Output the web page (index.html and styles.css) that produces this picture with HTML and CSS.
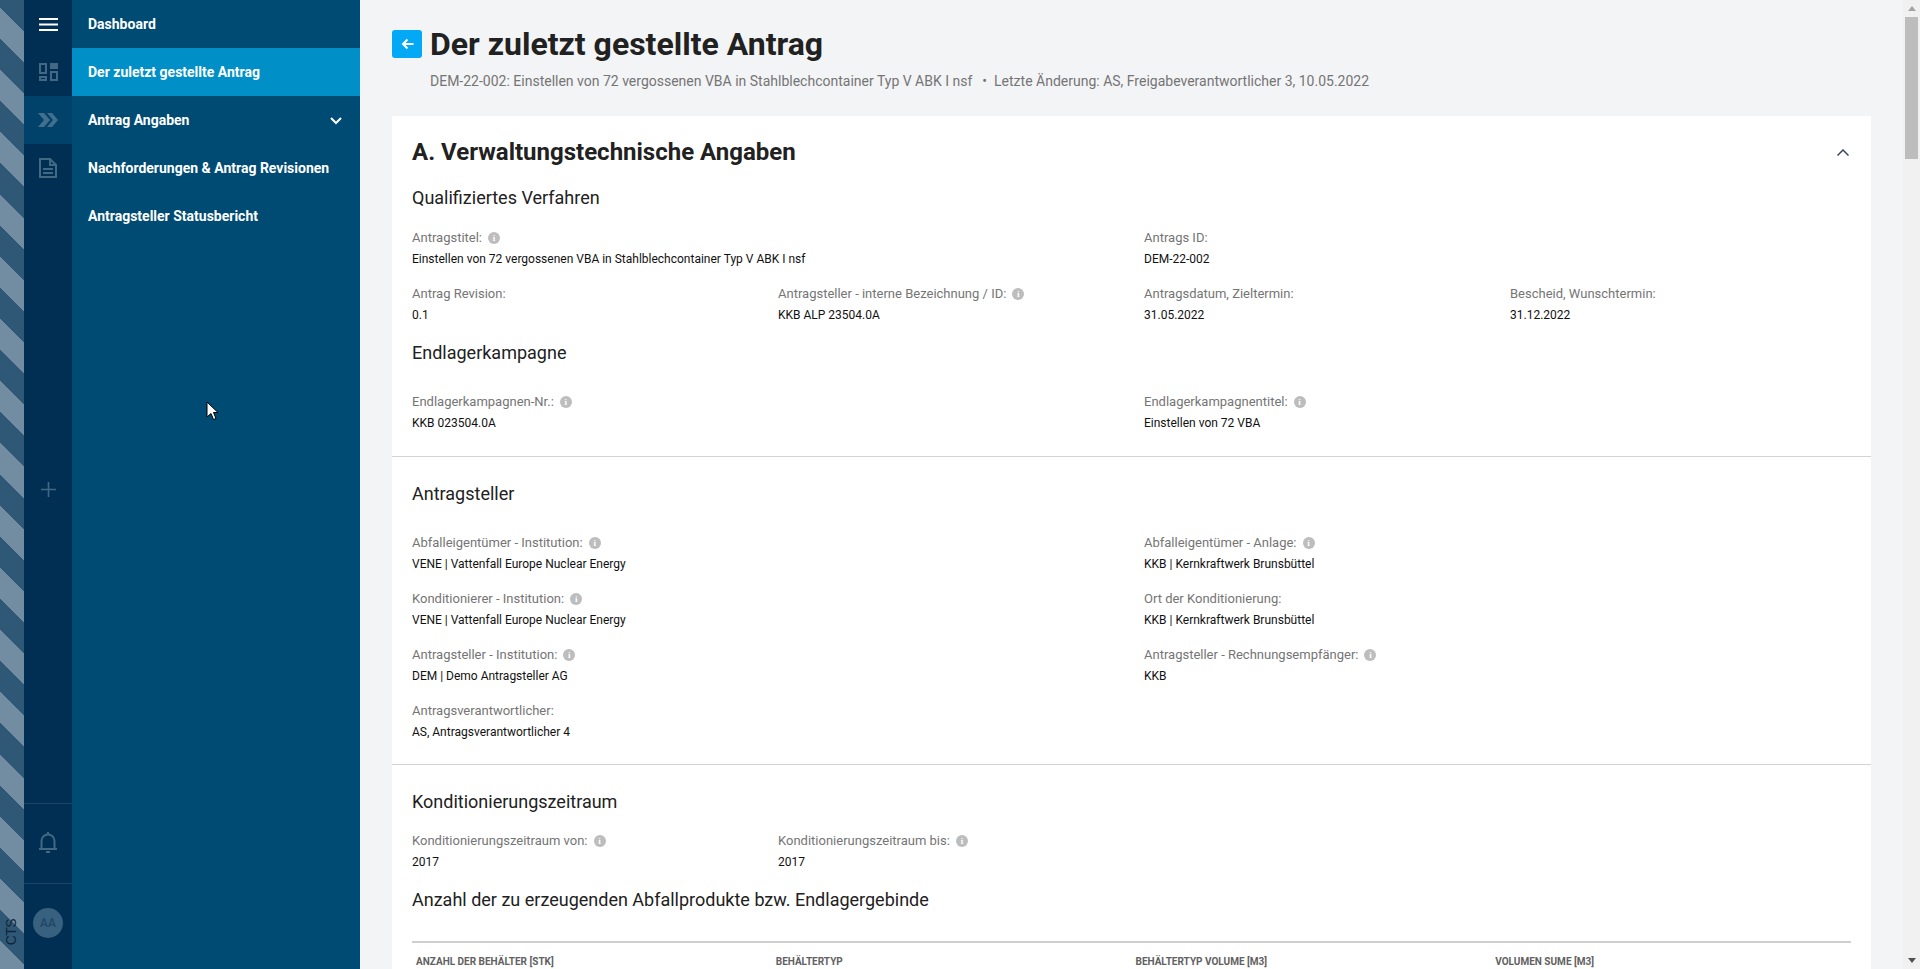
FILE: index.html
```html
<!DOCTYPE html>
<html lang="de">
<head>
<meta charset="utf-8">
<title>Der zuletzt gestellte Antrag</title>
<link rel="stylesheet" href="styles.css">
</head>
<body>
<div class="app">
  <div class="stripe"><span class="env">CTS</span></div>
  <nav class="rail">
    <div class="rail-item"><svg width="19" height="13" viewBox="0 0 19 13"><path d="M0 1h19M0 6.500h19M0 12h19" stroke="#fff" stroke-width="2"/></svg></div>
    <div class="rail-item"><svg class="dim" width="19" height="18" viewBox="0 0 19 18" fill="none" stroke="#6f8ea6" stroke-width="2"><rect x="1" y="1" width="6" height="9"/><rect x="11" y="0" width="8" height="6" fill="#6f8ea6" stroke="none"/><rect x="12" y="9" width="6" height="8"/><rect x="1" y="14" width="6" height="3"/></svg></div>
    <div class="rail-item rail-active"><svg class="dim" width="20" height="14" viewBox="0 0 20 14" fill="#6f8ea6"><path d="M0 0h6l6 7-6 7H0l6-7zM9 0h5l6 7-6 7H9l6-7z"/></svg></div>
    <div class="rail-item"><svg class="dim" width="18" height="20" viewBox="0 0 18 20" fill="none" stroke="#6f8ea6" stroke-width="2"><path d="M1 1h10l6 6v12H1zM11 1v6h6"/><path d="M4 11h10M4 15h10"/></svg></div>
    <div class="rail-add"><svg class="dim" width="15" height="15" viewBox="0 0 15 15"><path d="M7.500 0v15M0 7.500h15" stroke="#6f8ea6" stroke-width="1.600"/></svg></div>
    <div class="rail-bell"><svg class="dim" width="20" height="23" viewBox="0 0 20 23" fill="none" stroke="#6f8ea6" stroke-width="2"><path d="M1 18h18M3.500 18V10a6.500 6.500 0 0 1 13 0v8"/><path d="M10 3V1M8 21h4"/></svg></div>
    <div class="rail-user"><span class="avatar">AA</span></div>
  </nav>
  <aside class="menu">
    <a class="menu-item">Dashboard</a>
    <a class="menu-item menu-current">Der zuletzt gestellte Antrag</a>
    <a class="menu-item">Antrag Angaben<svg class="menu-chevron" width="12" height="8" viewBox="0 0 12 8" fill="none" stroke="#fff" stroke-width="2"><path d="M1 1l5 5 5-5"/></svg></a>
    <a class="menu-item">Nachforderungen &amp; Antrag Revisionen</a>
    <a class="menu-item">Antragsteller Statusbericht</a>
    <svg class="cursor" width="13" height="20" viewBox="0 0 13 20"><path d="M1 1v15l4-3.500 2.500 6 2.500-1-2.500-6H12z" fill="#fff" stroke="#000" stroke-width="1"/></svg>
  </aside>
  <main class="main">
    <header class="page-head">
      <div class="title-row">
        <span class="back"><svg width="13" height="12" viewBox="0 0 13 12" fill="none" stroke="#fff" stroke-width="2"><path d="M12.500 6H2M6.500 1.500L2 6l4.500 4.500"/></svg></span>
        <h1>Der zuletzt gestellte Antrag</h1>
      </div>
      <p class="subtitle"><span>DEM-22-002: Einstellen von 72 vergossenen VBA in Stahlblechcontainer Typ V ABK I nsf</span><span class="sep">•</span><span>Letzte Änderung: AS, Freigabeverantwortlicher 3, 10.05.2022</span></p>
    </header>
    <section class="card">
      <div class="block block-first">
        <div class="card-head">
          <h2>A. Verwaltungstechnische Angaben</h2>
          <svg width="12" height="7" viewBox="0 0 12 7" fill="none" stroke="#3a4a5c" stroke-width="1.500"><path d="M0.500 6.500L6 1l5.500 5.500"/></svg>
        </div>
        <h3 class="h-qual">Qualifiziertes Verfahren</h3>
        <div class="grid g-qual">
          <div class="field span2"><label>Antragstitel: <i class="info">i</i></label><p>Einstellen von 72 vergossenen VBA in Stahlblechcontainer Typ V ABK I nsf</p></div>
          <div class="field span2"><label>Antrags ID:</label><p>DEM-22-002</p></div>
          <div class="field"><label>Antrag Revision:</label><p>0.1</p></div>
          <div class="field"><label>Antragsteller - interne Bezeichnung / ID: <i class="info">i</i></label><p>KKB ALP 23504.0A</p></div>
          <div class="field"><label>Antragsdatum, Zieltermin:</label><p>31.05.2022</p></div>
          <div class="field"><label>Bescheid, Wunschtermin:</label><p>31.12.2022</p></div>
        </div>
        <h3 class="h-kamp">Endlagerkampagne</h3>
        <div class="grid g-kamp">
          <div class="field span2"><label>Endlagerkampagnen-Nr.: <i class="info">i</i></label><p>KKB 023504.0A</p></div>
          <div class="field span2"><label>Endlagerkampagnentitel: <i class="info">i</i></label><p>Einstellen von 72 VBA</p></div>
        </div>
      </div>
      <div class="block">
        <h3 class="h-sec">Antragsteller</h3>
        <div class="grid g-sec">
          <div class="field span2"><label>Abfalleigentümer - Institution: <i class="info">i</i></label><p>VENE | Vattenfall Europe Nuclear Energy</p></div>
          <div class="field span2"><label>Abfalleigentümer - Anlage: <i class="info">i</i></label><p>KKB | Kernkraftwerk Brunsbüttel</p></div>
          <div class="field span2"><label>Konditionierer - Institution: <i class="info">i</i></label><p>VENE | Vattenfall Europe Nuclear Energy</p></div>
          <div class="field span2"><label>Ort der Konditionierung:</label><p>KKB | Kernkraftwerk Brunsbüttel</p></div>
          <div class="field span2"><label>Antragsteller - Institution: <i class="info">i</i></label><p>DEM | Demo Antragsteller AG</p></div>
          <div class="field span2"><label>Antragsteller - Rechnungsempfänger: <i class="info">i</i></label><p>KKB</p></div>
          <div class="field span2"><label>Antragsverantwortlicher:</label><p>AS, Antragsverantwortlicher 4</p></div>
        </div>
      </div>
      <div class="block block-last">
        <h3 class="h-kon">Konditionierungszeitraum</h3>
        <div class="grid g-kon">
          <div class="field"><label>Konditionierungszeitraum von: <i class="info">i</i></label><p>2017</p></div>
          <div class="field"><label>Konditionierungszeitraum bis: <i class="info">i</i></label><p>2017</p></div>
        </div>
        <h3 class="h-anz">Anzahl der zu erzeugenden Abfallprodukte bzw. Endlagergebinde</h3>
        <div class="table-head">
          <span>Anzahl der Behälter [Stk]</span>
          <span>Behältertyp</span>
          <span>Behältertyp Volume [m3]</span>
          <span>Volumen Sume [m3]</span>
        </div>
      </div>
    </section>
  </main>
  <div class="scrollbar">
    <div class="sb-btn"><svg width="8" height="5" viewBox="0 0 8 5"><path d="M4 0l4 5H0z" fill="#a3a3a3"/></svg></div>
    <div class="sb-thumb"></div>
    <div class="sb-btn sb-down"><svg width="8" height="5" viewBox="0 0 8 5"><path d="M4 5l4-5H0z" fill="#505050"/></svg></div>
  </div>
</div>
</body>
</html>
```
FILE: styles.css
```css
* { box-sizing: border-box; }
html, body { margin: 0; height: 100%; overflow: hidden; }
body { font-family: Roboto, "Liberation Sans", sans-serif; color: #212121; background: #f3f4f6; }
h1, h2, h3, p { margin: 0; }

.app { display: flex; height: 969px; overflow: hidden; }

.stripe {
  position: relative;
  width: 24px;
  flex: none;
  background: repeating-linear-gradient(45deg, #728ca1 -2px, #728ca1 20px, #2f5877 20px, #2f5877 42px);
}
.env {
  position: absolute;
  left: 3px;
  bottom: 24px;
  writing-mode: vertical-rl;
  transform: rotate(180deg);
  font: 14px "Liberation Sans", sans-serif;
  letter-spacing: -.6px;
  color: #10243a;
}

.rail { width: 48px; flex: none; background: #002f53; display: flex; flex-direction: column; }
.rail-item { height: 48px; display: flex; align-items: center; justify-content: center; }
.rail-active { background: #004269; }
.dim { opacity: .6; }
.rail-add { height: 48px; margin-top: 273px; display: flex; align-items: center; justify-content: center; }
.rail-bell { margin-top: auto; height: 81px; border-top: 1px solid #1b4465; border-bottom: 1px solid #1b4465; padding-bottom: 2px; display: flex; align-items: center; justify-content: center; }
.rail-user { height: 85px; display: flex; justify-content: center; padding-top: 24px; }
.avatar { width: 30px; height: 30px; border-radius: 50%; background: #38607f; color: #1f4766; font-size: 12px; font-weight: 500; display: flex; align-items: center; justify-content: center; }

.menu { position: relative; width: 288px; flex: none; background: #004b74; display: flex; flex-direction: column; }
.menu-item { height: 48px; padding: 0 16px; display: flex; align-items: center; justify-content: space-between; font-size: 14px; font-weight: 700; color: #fff; }
.menu-current { background: #008fc7; }
.menu-chevron { margin-right: 2px; margin-top: 2px; }
.cursor { position: absolute; left: 134px; top: 401px; }

.main { flex: 1; min-width: 0; padding: 0 32px; }
.page-head { height: 116px; padding-top: 28px; }
.title-row { display: flex; align-items: center; gap: 8px; height: 32px; }
.back { width: 30px; height: 28px; border-radius: 3px; background: #03a9f4; display: flex; align-items: center; justify-content: center; }
h1 { font-size: 32px; line-height: 32px; font-weight: 700; color: #212121; }
.subtitle { margin: 11px 0 0 38px; font-size: 14px; line-height: 20px; color: #757575; white-space: nowrap; }
.sep { margin: 0 7px 0 10px; }

.card { background: #fff; }
.block { padding: 0 20px; border-top: 1px solid #cfd2d6; }
.block-first { border-top: 0; height: 340px; padding-top: 20px; }
.card-head { display: flex; align-items: center; justify-content: space-between; height: 32px; padding-right: 2px; }
h2 { font-size: 24px; line-height: 32px; font-weight: 700; color: #212121; }
h3 { font-size: 18px; line-height: 24px; font-weight: 400; color: #212121; }
.h-qual { margin-top: 18px; }
.h-kamp { margin-top: 16px; }
.h-sec { margin-top: 25px; }
.h-kon { margin-top: 25px; }
.h-anz { margin-top: 16px; }

.grid { display: grid; grid-template-columns: repeat(4, 1fr); column-gap: 25px; }
.g-qual { margin-top: 18px; row-gap: 15px; }
.g-kamp { margin-top: 27px; }
.g-sec { margin-top: 27px; row-gap: 15px; padding-bottom: 22px; }
.g-kon { margin-top: 17px; }

.span2 { grid-column: span 2; }
.field { min-height: 41px; }
.field label { display: flex; align-items: center; gap: 6px; height: 20px; font-size: 13px; line-height: 20px; color: #757575; }
.field p { margin-top: 1px; font-size: 12px; line-height: 20px; color: #111; }
.info {
  width: 12px; height: 12px; border-radius: 50%;
  background: #bdbdbd; color: #fff;
  font: 700 9px/12px "Liberation Serif", serif;
  text-align: center;
}

.table-head {
  margin-top: 29px;
  border-top: 2px solid #cfcfcf;
  display: grid;
  grid-template-columns: repeat(4, 1fr);
  padding-top: 11px;
  font-size: 10px;
  line-height: 16px;
  font-weight: 700;
  color: #616161;
  text-transform: uppercase;
}
.table-head span { padding-left: 4px; }

.scrollbar { width: 17px; flex: none; background: #f1f1f1; display: flex; flex-direction: column; }
.sb-btn { height: 17px; display: flex; align-items: center; justify-content: center; }
.sb-down { margin-top: auto; }
.sb-thumb { height: 142px; margin: 0 2px; background: #bdbdbd; }
```
